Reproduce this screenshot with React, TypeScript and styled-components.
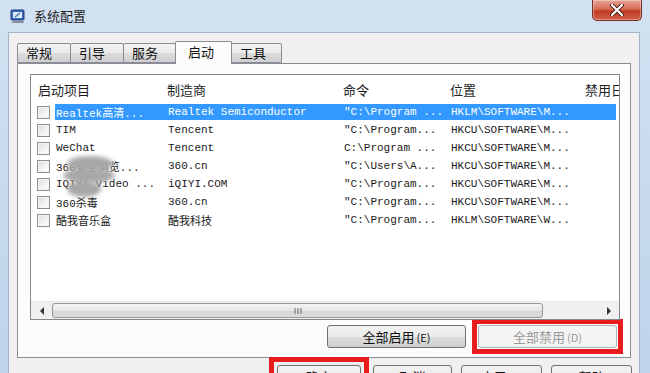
import styled, { createGlobalStyle } from "styled-components";

const GlobalStyle = createGlobalStyle`
  html, body {
    margin: 0;
    padding: 0;
    background: #cfdeee;
  }
  * {
    box-sizing: border-box;
  }
`;

const ui = `"Noto Sans CJK SC", "Noto Sans", sans-serif`;
const mono = `"Liberation Mono", "Noto Sans CJK SC", monospace`;

const Window = styled.div`
  width: 650px;
  height: 373px;
  overflow: hidden;
  display: flex;
  flex-direction: column;
  background: linear-gradient(180deg, #d3e2f2 0%, #c9dbee 40%, #bfd4ea 100%);
  font-family: ${ui};
`;

const TitleBar = styled.div`
  height: 32px;
  flex-shrink: 0;
  display: flex;
  align-items: flex-start;
  padding-left: 10px;
`;

const AppIcon = styled.svg`
  margin-top: 9px;
  flex-shrink: 0;
`;

const Title = styled.div`
  margin-top: 6px;
  margin-left: 8px;
  font-size: 13px;
  line-height: 20px;
  color: #1e1e1e;
`;

const CloseButton = styled.div`
  margin-left: auto;
  margin-right: 8px;
  width: 50px;
  height: 21px;
  border: 1px solid #7a2d22;
  border-top: none;
  border-radius: 0 0 5px 5px;
  background: linear-gradient(180deg, #e8a596 0%, #d66c58 45%, #c23b24 55%, #d0604a 100%);
  box-shadow: inset 0 0 0 1px rgba(255, 255, 255, 0.35);
  display: flex;
  align-items: center;
  justify-content: center;
`;

const Client = styled.div`
  flex: 1;
  margin: 0 10px 0 8px;
  background: #f0f0f0;
  border: 1px solid #a6b6c8;
  border-bottom: none;
  padding: 7px 7px 0 8px;
  display: flex;
  flex-direction: column;
`;

const TabStrip = styled.div`
  display: flex;
  align-items: flex-end;
  height: 23px;
  padding-left: 1px;
  position: relative;
  z-index: 1;
`;

const Tab = styled.div<{ $active?: boolean; $w: number }>`
  width: ${(p) => p.$w}px;
  height: ${(p) => (p.$active ? 23 : 20)}px;
  margin-bottom: ${(p) => (p.$active ? -1 : 0)}px;
  border: 1px solid #898c95;
  border-bottom: ${(p) => (p.$active ? "none" : "1px solid #898c95")};
  margin-left: -1px;
  border-radius: 2px 2px 0 0;
  background: ${(p) =>
    p.$active ? "#fcfcfc" : "linear-gradient(180deg, #f2f2f2 0%, #ebebeb 50%, #dddddd 51%, #cfcfcf 100%)"};
  font-size: 13px;
  line-height: ${(p) => (p.$active ? 20 : 18)}px;
  color: #111;
  padding-left: ${(p) => (p.$active ? 12 : 8)}px;
`;

const Panel = styled.div`
  height: 295px;
  margin-right: 1px;
  border: 1px solid #898c95;
  background: #fcfcfc;
  padding: 10px 10px 0 12px;
  display: flex;
  flex-direction: column;
`;

const ListBox = styled.div`
  height: 246px;
  border: 1px solid #828790;
  background: #fff;
  display: flex;
  flex-direction: column;
  overflow: hidden;
  position: relative;
`;

const HeaderRow = styled.div`
  height: 28px;
  display: flex;
  align-items: center;
  flex-shrink: 0;
`;

const HeaderCell = styled.div<{ $w?: number; $pl?: number }>`
  width: ${(p) => (p.$w ? `${p.$w}px` : "auto")};
  flex: ${(p) => (p.$w ? "none" : "1")};
  padding-left: ${(p) => p.$pl ?? 0}px;
  font-size: 13px;
  color: #1e1e1e;
  white-space: nowrap;
  overflow: hidden;
`;

const Row = styled.div`
  height: 18px;
  display: flex;
  align-items: center;
`;

const CheckCell = styled.div`
  width: 24px;
  flex-shrink: 0;
  display: flex;
  padding-left: 6px;
`;

const CheckBox = styled.div`
  width: 13px;
  height: 13px;
  border: 1px solid #8f8f8f;
  background: linear-gradient(135deg, #dcdcdc 0%, #f4f4f4 60%, #ffffff 100%);
  box-shadow: inset 0 0 0 1px #f4f4f4;
`;

const RowBody = styled.div<{ $selected?: boolean }>`
  flex: 1;
  margin-right: 3px;
  height: 16px;
  display: flex;
  align-items: center;
  background: ${(p) => (p.$selected ? "#3399ff" : "transparent")};
  color: ${(p) => (p.$selected ? "#fff" : "#1a1a1a")};
`;

const Cell = styled.div<{ $w: number }>`
  width: ${(p) => p.$w}px;
  flex-shrink: 0;
  padding-left: 1px;
  font-family: ${mono};
  font-size: 11px;
  white-space: pre;
  overflow: hidden;
`;

/* the blurred-out patch over three item names in the screenshot */
const Smudge = styled.div`
  position: absolute;
  left: 32px;
  top: 80px;
  width: 52px;
  height: 44px;
  pointer-events: none;
  span {
    position: absolute;
    background: #a8a8a8;
    border-radius: 50%;
    filter: blur(2px);
  }
`;

const Filler = styled.div`
  flex: 1;
`;

const HScroll = styled.div`
  height: 18px;
  flex-shrink: 0;
  display: flex;
  align-items: stretch;
  background: #f0f0f0;
  border-top: 1px solid #e6e6e6;
`;

const ArrowBox = styled.div`
  width: 21px;
  display: flex;
  align-items: center;
  justify-content: center;
`;

const Track = styled.div`
  flex: 1;
  display: flex;
  padding: 1px 0;
`;

const Thumb = styled.div`
  border: 1px solid #979797;
  border-radius: 3px;
  background: linear-gradient(180deg, #f4f4f4 0%, #e6e6e6 50%, #d6d6d6 51%, #dcdcdc 100%);
  display: flex;
  align-items: center;
  justify-content: center;
`;

const ButtonRow = styled.div`
  display: flex;
  justify-content: flex-end;
  gap: 12px;
  margin-top: 5px;
  padding-right: 3px;
`;

const Button = styled.div<{ $w: number; $disabled?: boolean }>`
  width: ${(p) => p.$w}px;
  height: 23px;
  flex-shrink: 0;
  border: 1px solid ${(p) => (p.$disabled ? "#adb2b5" : "#707070")};
  border-radius: 3px;
  background: ${(p) =>
    p.$disabled ? "#f4f4f4" : "linear-gradient(180deg, #f2f2f2 0%, #ebebeb 50%, #dddddd 51%, #cfcfcf 100%)"};
  color: ${(p) => (p.$disabled ? "#9a9a9a" : "#111")};
  font-size: 13px;
  line-height: 21px;
  text-align: center;
  white-space: nowrap;
`;

/* red annotation frame drawn round a button; negative margins keep the button's place */
const Marker = styled.div<{ $pad: number }>`
  flex-shrink: 0;
  border: 5px solid #e81c1c;
  padding: ${(p) => p.$pad}px;
  margin: ${(p) => -(p.$pad + 5)}px;
  display: flex;
`;

const Key = styled.span`
  font-size: 11px;
  margin-left: 2px;
`;

const FooterRow = styled.div`
  display: flex;
  justify-content: flex-end;
  margin-top: 7px;
`;

const FooterSlot = styled.div<{ $gap: number }>`
  display: flex;
  margin-right: ${(p) => p.$gap}px;
`;

const cols = [112, 176, 107, 135];

const rows = [
  ["Realtek高清...", "Realtek Semiconductor", "\"C:\\Program ...", "HKLM\\SOFTWARE\\M..."],
  ["TIM", "Tencent", "\"C:\\Program...", "HKCU\\SOFTWARE\\M..."],
  ["WeChat", "Tencent", "C:\\Program ...", "HKCU\\SOFTWARE\\M..."],
  ["360安全浏览...", "360.cn", "\"C:\\Users\\A...", "HKCU\\SOFTWARE\\M..."],
  ["IQIYI Video ...", "iQIYI.COM", "\"C:\\Program...", "HKCU\\SOFTWARE\\M..."],
  ["360杀毒", "360.cn", "\"C:\\Program...", "HKCU\\SOFTWARE\\M..."],
  ["酷我音乐盒", "酷我科技", "\"C:\\Program...", "HKLM\\SOFTWARE\\W..."],
];

const tabs = [
  { label: "常规", w: 54 },
  { label: "引导", w: 54 },
  { label: "服务", w: 53 },
  { label: "启动", w: 57, active: true },
  { label: "工具", w: 51 },
];

export default function App() {
  return (
    <>
      <GlobalStyle />
      <Window>
        <TitleBar>
          <AppIcon width="16" height="15" viewBox="0 0 16 15">
            <rect x="1" y="1" width="13" height="10" rx="1" fill="#3a6ab8" stroke="#1f3f7a" />
            <rect x="3" y="3" width="9" height="6" fill="#dce9f8" />
            <path d="M5 8 L10 4" stroke="#3a6ab8" strokeWidth="1.2" />
            <rect x="2" y="12" width="12" height="2" rx="1" fill="#8a8fa0" />
          </AppIcon>
          <Title>系统配置</Title>
          <CloseButton>
            <svg width="14" height="12" viewBox="0 0 14 12">
              <path d="M2 1 L12 11 M12 1 L2 11" stroke="#4a1a12" strokeWidth="4" strokeLinecap="round" />
              <path d="M2 1 L12 11 M12 1 L2 11" stroke="#ffffff" strokeWidth="2.2" strokeLinecap="round" />
            </svg>
          </CloseButton>
        </TitleBar>
        <Client>
          <TabStrip>
            {tabs.map((t) => (
              <Tab key={t.label} $w={t.w} $active={t.active}>
                {t.label}
              </Tab>
            ))}
          </TabStrip>
          <Panel>
            <ListBox>
              <HeaderRow>
                <HeaderCell $w={136} $pl={7}>启动项目</HeaderCell>
                <HeaderCell $w={176}>制造商</HeaderCell>
                <HeaderCell $w={107}>命令</HeaderCell>
                <HeaderCell $w={135}>位置</HeaderCell>
                <HeaderCell>禁用日期</HeaderCell>
              </HeaderRow>
              {rows.map((r, i) => (
                <Row key={i}>
                  <CheckCell>
                    <CheckBox />
                  </CheckCell>
                  <RowBody $selected={i === 0}>
                    {r.map((c, j) => (
                      <Cell key={j} $w={cols[j]}>
                        {c}
                      </Cell>
                    ))}
                  </RowBody>
                </Row>
              ))}
              <Smudge>
                <span style={{ left: 4, top: 1, width: 46, height: 15 }} />
                <span style={{ left: 0, top: 13, width: 52, height: 15 }} />
                <span style={{ left: 4, top: 26, width: 34, height: 16 }} />
              </Smudge>
              <Filler />
              <HScroll>
                <ArrowBox>
                  <svg width="6" height="8" viewBox="0 0 6 8">
                    <path d="M5 0 L1 4 L5 8 Z" fill="#333" />
                  </svg>
                </ArrowBox>
                <Track>
                  <Thumb style={{ width: 491 }}>
                    <svg width="8" height="8" viewBox="0 0 8 8">
                      <path d="M1 1 V7 M4 1 V7 M7 1 V7" stroke="#666" strokeWidth="1" />
                    </svg>
                  </Thumb>
                </Track>
                <ArrowBox>
                  <svg width="6" height="8" viewBox="0 0 6 8">
                    <path d="M1 0 L5 4 L1 8 Z" fill="#333" />
                  </svg>
                </ArrowBox>
              </HScroll>
            </ListBox>
            <ButtonRow>
              <Button $w={139}>
                全部启用<Key>(E)</Key>
              </Button>
              <Marker $pad={1}>
                <Button $w={139} $disabled>
                  全部禁用<Key>(D)</Key>
                </Button>
              </Marker>
            </ButtonRow>
          </Panel>
          <FooterRow>
            <FooterSlot $gap={12}>
              <Marker $pad={3}>
                <Button $w={84}>确定</Button>
              </Marker>
            </FooterSlot>
            <FooterSlot $gap={9}>
              <Button $w={79}>取消</Button>
            </FooterSlot>
            <FooterSlot $gap={9}>
              <Button $w={81}>
                应用<Key>(A)</Key>
              </Button>
            </FooterSlot>
            <FooterSlot $gap={0}>
              <Button $w={81}>帮助</Button>
            </FooterSlot>
          </FooterRow>
        </Client>
      </Window>
    </>
  );
}
